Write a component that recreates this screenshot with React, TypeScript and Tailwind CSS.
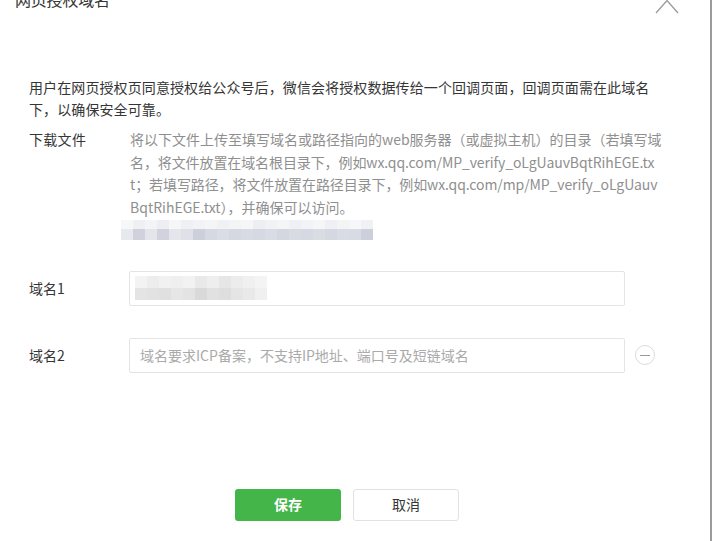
import React from "react";

const blurTop = ["#f6f7f9", "#eef0f4", "#f3f4f7", "#eceef2", "#f5f6f8", "#eef0f3", "#f2f3f6", "#f4f5f7", "#eff1f4", "#f3f4f6", "#f5f6f8", "#eceef2", "#f1f2f5", "#f4f5f7", "#eef0f3", "#f2f3f6", "#f5f6f8", "#eff0f3", "#f3f4f6", "#f6f7f9", "#f0f1f4"];
const blurBottom = ["#e7e9ee", "#cfd2dc", "#e3e5eb", "#d0d3dd", "#e4e6ec", "#dfe1e8", "#cdd0da", "#d6d9e2", "#dadde5", "#d5d8e1", "#d8dbe3", "#d6d9e2", "#d9dce4", "#d4d7e0", "#d9dbe3", "#d6d9e1", "#dadce4", "#d5d8e0", "#d9dce4", "#d8dbe3", "#cdd0da"];

const inTop = ["#f3f3f3", "#ededed", "#f1f1f1", "#efefef", "#f2f2f2", "#e9e9e9", "#eeeeee", "#e6e6e6", "#ececec", "#f0f0f0", "#f4f4f4"];
const inBottom = ["#e4e4e4", "#e2e2e2", "#e0e0e0", "#e6e6e6", "#e3e3e3", "#d9d9d9", "#e1e1e1", "#dedede", "#e5e5e5", "#e9e9e9", "#f0f0f0"];

export default function App() {
  return (
    <div className="flex w-[712px] h-[541px] bg-white overflow-hidden font-['Noto_Sans_CJK_SC','Noto_Sans',sans-serif] text-[#353535]">
      <div className="flex-1 flex flex-col">
        <div className="flex justify-between items-start h-[14px] pl-[15px] pr-[31px]">
          <div className="-mt-[13px] text-[16px] leading-[24px] tracking-[-0.2px] text-[#353535]">网页授权域名</div>
          <svg width="24" height="15" viewBox="0 0 24 15" className="-mt-[1px]">
            <path d="M1 14 L12 1.5 L23 14" fill="none" stroke="#9a9a9a" strokeWidth="1.3" />
          </svg>
        </div>

        <div className="mt-[62px] ml-[29px] flex flex-col text-[14px] leading-[22px] tracking-[0.1px] text-[#353535] whitespace-nowrap">
          <p>用户在网页授权页同意授权给公众号后，微信会将授权数据传给一个回调页面，回调页面需在此域名</p>
          <p>下，以确保安全可靠。</p>
        </div>

        <div className="flex mt-[8px] ml-[29px] text-[14px] leading-[22.7px]">
          <div className="w-[101px] shrink-0 tracking-[0.3px]">下载文件</div>
          <div className="flex flex-col text-[#8f8f8f] whitespace-nowrap">
            <div>将以下文件上传至填写域名或路径指向的web服务器（或虚拟主机）的目录（若填写域</div>
            <div className="tracking-[-0.1px]">名，将文件放置在域名根目录下，例如wx.qq.com/MP_verify_oLgUauvBqtRihEGE.tx</div>
            <div className="tracking-[-0.1px]">t；若填写路径，将文件放置在路径目录下，例如wx.qq.com/mp/MP_verify_oLgUauv</div>
            <div>BqtRihEGE.txt），并确保可以访问。</div>
            <div className="-ml-[9px] mt-[1px] flex flex-col">
              <div className="flex h-[9px]">
                {blurTop.map((c, i) => (
                  <div key={i} className="w-[12px] h-full" style={{ background: c }} />
                ))}
              </div>
              <div className="flex h-[11px]">
                {blurBottom.map((c, i) => (
                  <div key={i} className="w-[12px] h-full" style={{ background: c }} />
                ))}
              </div>
            </div>
          </div>
        </div>

        <div className="flex items-center mt-[31px] ml-[29px] text-[14px]">
          <div className="w-[100px] shrink-0">域名1</div>
          <div className="w-[496px] h-[35px] border border-[#e4e4e4] rounded-[2px] flex flex-col justify-center pl-[5px]">
            <div className="flex h-[12px]">
              {inTop.map((c, i) => (
                <div key={i} className="w-[12px] h-full" style={{ background: c }} />
              ))}
            </div>
            <div className="flex h-[12px]">
              {inBottom.map((c, i) => (
                <div key={i} className="w-[12px] h-full" style={{ background: c }} />
              ))}
            </div>
          </div>
        </div>

        <div className="flex items-center mt-[32px] ml-[29px] text-[14px]">
          <div className="w-[100px] shrink-0">域名2</div>
          <input
            className="w-[496px] h-[35px] border border-[#e4e4e4] rounded-[2px] pl-[10px] text-[14px] outline-none placeholder:text-[#aaaaaa]"
            placeholder="域名要求ICP备案，不支持IP地址、端口号及短链域名"
          />
          <div className="ml-[10px] w-[20px] h-[20px] rounded-full border border-[#dcdcdc] flex items-center justify-center">
            <div className="w-[10px] h-[1px] bg-[#9a9a9a]" />
          </div>
        </div>

        <div className="flex gap-[12px] mt-[116px] pl-[235px]">
          <button className="w-[106px] h-[32px] rounded-[3px] bg-[#44b549] text-white text-[14px] font-bold">保存</button>
          <button className="w-[106px] h-[32px] rounded-[3px] bg-white border border-[#e2e2e2] text-[#353535] text-[14px]">取消</button>
        </div>
      </div>
      <div className="w-[2px] h-full bg-[#9b9b9b]" />
    </div>
  );
}
